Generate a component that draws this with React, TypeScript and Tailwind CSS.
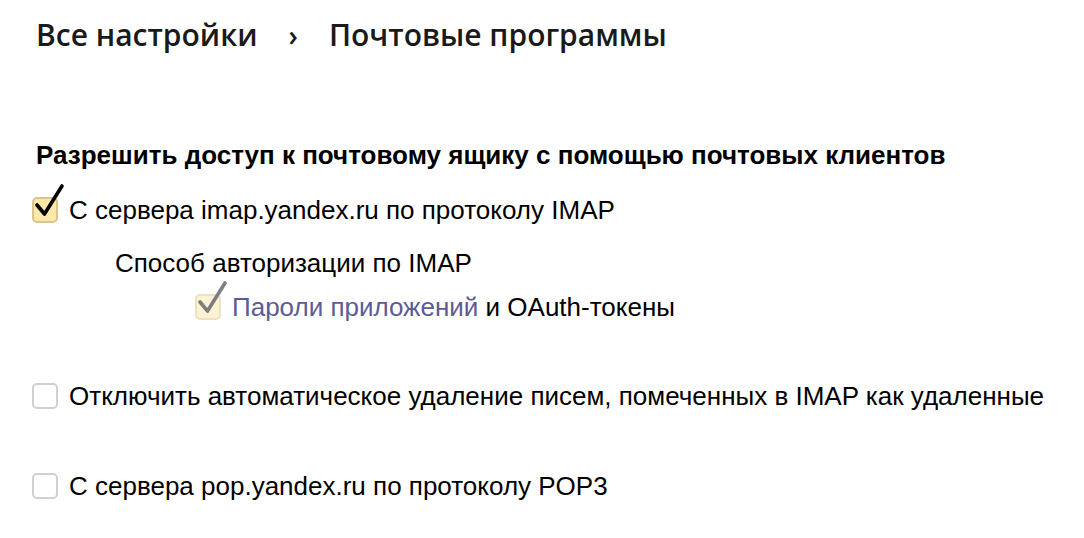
import React from 'react';

const sans = { fontFamily: '"Liberation Sans", Arial, sans-serif' };

const Check: React.FC<{ checked?: boolean; faded?: boolean }> = ({ checked, faded }) => (
  <span className={`relative inline-block shrink-0 ${faded ? 'opacity-50' : ''}`}>
    <span
      className={
        checked
          ? 'block h-[26px] w-[26px] rounded-[5px] border-2 border-[#d9c68f] bg-[#fce9a7]'
          : 'block h-[26px] w-[26px] rounded-[5px] border-2 border-[#d0d0d0] bg-white'
      }
    />
    {checked && (
      <svg className="absolute left-0 top-[-14px] h-[40px] w-[34px]" viewBox="0 0 34 40" fill="none">
        <path d="M5 22 L12.5 31 L30 3" stroke="#000" strokeWidth="3.6" strokeLinecap="round" strokeLinejoin="round" />
      </svg>
    )}
  </span>
);

const App: React.FC = () => {
  return (
    <div className="h-[538px] w-[1084px] bg-white pl-[36px] pt-[17px] text-black">
      <div
        className="flex items-center text-[30px] leading-[36px] font-semibold text-[#1a1a1a]"
        style={{ fontFamily: '"Open Sans", "Noto Sans", sans-serif' }}
      >
        <span>Все настройки</span>
        <span className="mx-[31px] text-[28px]">›</span>
        <span>Почтовые программы</span>
      </div>

      <div style={sans}>
        <h2 className="mt-[87px] text-[26px] leading-[30px] font-bold">
          Разрешить доступ к почтовому ящику с помощью почтовых клиентов
        </h2>

        <label className="mt-[25px] flex items-center gap-[11px] -ml-[4px]">
          <Check checked />
          <span className="text-[26px] leading-[30px]">С сервера imap.yandex.ru по протоколу IMAP</span>
        </label>

        <div className="ml-[79px] mt-[23px] text-[26px] leading-[30px]">Способ авторизации по IMAP</div>

        <label className="ml-[159px] mt-[14px] flex items-center gap-[11px]">
          <Check checked faded />
          <span className="text-[26px] leading-[30px]">
            <a className="text-[#5d5b96]">Пароли приложений</a> и OAuth-токены
          </span>
        </label>

        <label className="mt-[59px] flex items-center gap-[11px] -ml-[4px]">
          <Check />
          <span className="text-[26px] leading-[30px]">
            Отключить автоматическое удаление писем, помеченных в IMAP как удаленные
          </span>
        </label>

        <label className="mt-[60px] flex items-center gap-[11px] -ml-[4px]">
          <Check />
          <span className="text-[26px] leading-[30px]">С сервера pop.yandex.ru по протоколу POP3</span>
        </label>
      </div>
    </div>
  );
};

export default App;
